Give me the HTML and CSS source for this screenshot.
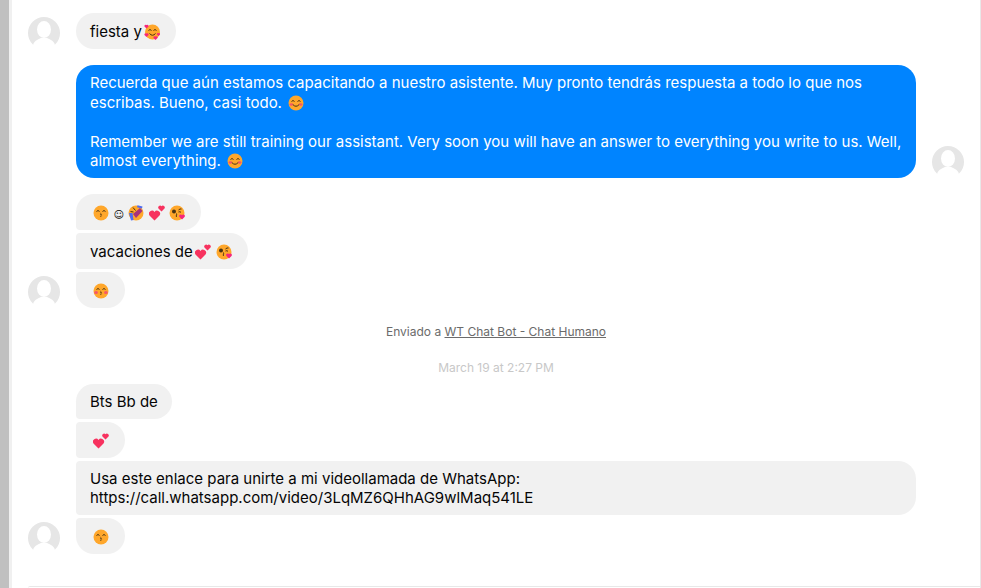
FILE: index.html
```html
<!DOCTYPE html>
<html lang="en">
<head>
    <meta charset="UTF-8">
    <meta name="viewport" content="width=device-width, initial-scale=1.0">
    <title>Chat</title>
    <link rel="stylesheet" href="styles.css">
</head>
<body>
    <svg class="defs" width="0" height="0">
        <defs>
            <symbol id="avatar" viewBox="0 0 32 32">
                <circle cx="16" cy="16" r="16" fill="#e6e6e6"/>
                <ellipse cx="16" cy="12.500" rx="7" ry="8.500" fill="#fff"/>
                <path d="M5 28.500c.5-4 3.500-5.500 8-7.500h6c4.500 2 7.500 3.500 8 7.500a16 16 0 0 1-22 0z" fill="#fff"/>
            </symbol>
            <symbol id="smile" viewBox="0 0 16 16">
                <circle cx="8" cy="8" r="7.500" fill="#ffa72b"/>
                <ellipse cx="3.300" cy="9.500" rx="1.800" ry="1.200" fill="#f5566a"/>
                <ellipse cx="12.700" cy="9.500" rx="1.800" ry="1.200" fill="#f5566a"/>
                <path d="M3.500 6.500q1.500-2 3 0M9.500 6.500q1.500-2 3 0M4.800 9.500q3.200 3.500 6.400 0" fill="none" stroke="#4a3312" stroke-width="1"/>
            </symbol>
            <symbol id="kiss" viewBox="0 0 16 16">
                <circle cx="8" cy="8" r="7.500" fill="#ffa72b"/>
                <path d="M3.500 6.500q1.500-2 3 0M9.500 6.500q1.500-2 3 0M7.500 8.300q1.800.7 0 1.700q1.800.7 0 1.700" fill="none" stroke="#4a3312" stroke-width="1"/>
            </symbol>
            <symbol id="kissblush" viewBox="0 0 16 16">
                <use href="#kiss"/>
                <ellipse cx="3.100" cy="9.500" rx="1.800" ry="1.500" fill="#f5566a"/>
                <ellipse cx="12.900" cy="9.500" rx="1.800" ry="1.500" fill="#f5566a"/>
            </symbol>
            <symbol id="hugs" viewBox="0 0 16 16">
                <circle cx="8.500" cy="8" r="7.500" fill="#ffa72b"/>
                <path d="M4.500 6.500q1.500-2 3 0M9.500 6.500q1.500-2 3 0M5.500 9.500q3 3.500 6 0" fill="none" stroke="#4a3312" stroke-width="1"/>
                <path d="M2.500 4.500l-2-2a1.300 1.300 0 0 1 2-1.500a1.300 1.300 0 0 1 2 1.500zM2.500 13l-2-2a1.300 1.300 0 0 1 2-1.500a1.300 1.300 0 0 1 2 1.500zM11.500 16l-2-2a1.300 1.300 0 0 1 2-1.500a1.300 1.300 0 0 1 2 1.500zM14.500 12l-1.500-1.500a1 1 0 0 1 1.500-1.200a1 1 0 0 1 1.500 1.200z" fill="#f5267c"/>
            </symbol>
            <symbol id="rofl" viewBox="0 0 16 16">
                <circle cx="8" cy="8" r="7.500" fill="#ffa72b"/>
                <path d="M5 9l7-6 2.500 3-6.500 7z" fill="#a8327a"/>
                <path d="M5 2.500l2.500 3M2.500 6.500l3 .5" fill="none" stroke="#4a3312" stroke-width="1"/>
                <path d="M1 8l2 7.500 2.500-.5-1-7zM9.500.2l5 1.300-.5 2-5-1.300z" fill="#4f6cf0"/>
            </symbol>
            <symbol id="hearts" viewBox="0 0 16 16">
                <path d="M5.500 15.500l-5-5a3 3 0 0 1 5-3.500a3 3 0 0 1 5 3.500z" fill="#f7325f"/>
                <path d="M12.500 6.500l-3-3a1.900 1.900 0 0 1 3-2.300a1.900 1.900 0 0 1 3 2.300z" fill="#f7325f"/>
            </symbol>
            <symbol id="blow" viewBox="0 0 16 16">
                <circle cx="8" cy="8" r="7.500" fill="#ffa72b"/>
                <circle cx="5" cy="6.500" r="2" fill="#4a3312"/>
                <path d="M9.500 5q1.500-1.500 3-1M9.500 7q1.500-.7 2.500.3M7 8.500q1.800.7 0 1.700q1.800.7 0 1.700" fill="none" stroke="#4a3312" stroke-width="1"/>
                <path d="M13 14.500l-2.500-2.500a1.500 1.500 0 0 1 2.500-1.900a1.500 1.500 0 0 1 2.500 1.900z" fill="#f5267c"/>
            </symbol>
        </defs>
    </svg>

    <div class="strip"></div>
    <main class="panel">
        <div class="thread">
            <div class="row">
                <svg class="avatar"><use href="#avatar"/></svg>
                <div class="stack">
                    <div class="bubble">fiesta y<svg class="emoji"><use href="#hugs"/></svg></div>
                </div>
            </div>

            <div class="row mine">
                <div class="stack">
                    <div class="bubble blue">Recuerda que aún estamos capacitando a nuestro asistente. Muy pronto tendrás respuesta a todo lo que nos escribas. Bueno, casi todo. <svg class="emoji"><use href="#smile"/></svg><br><br>Remember we are still training our assistant. Very soon you will have an answer to everything you write to us. Well, almost everything. <svg class="emoji"><use href="#smile"/></svg></div>
                </div>
                <svg class="avatar"><use href="#avatar"/></svg>
            </div>

            <div class="row">
                <svg class="avatar"><use href="#avatar"/></svg>
                <div class="stack">
                    <div class="bubble first"><svg class="emoji"><use href="#kiss"/></svg><span class="plain">☺</span><svg class="emoji"><use href="#rofl"/></svg><svg class="emoji"><use href="#hearts"/></svg><svg class="emoji"><use href="#blow"/></svg></div>
                    <div class="bubble middle">vacaciones de<svg class="emoji"><use href="#hearts"/></svg><svg class="emoji"><use href="#blow"/></svg></div>
                    <div class="bubble last"><svg class="emoji"><use href="#kissblush"/></svg></div>
                </div>
            </div>

            <p class="sent">Enviado a <a href="#">WT Chat Bot - Chat Humano</a></p>
            <p class="date">March 19 at 2:27 PM</p>

            <div class="row">
                <svg class="avatar"><use href="#avatar"/></svg>
                <div class="stack">
                    <div class="bubble first text-only">Bts Bb de</div>
                    <div class="bubble middle"><svg class="emoji"><use href="#hearts"/></svg></div>
                    <div class="bubble middle wide">Usa este enlace para unirte a mi videollamada de WhatsApp:<br>https://call.whatsapp.com/video/3LqMZ6QHhAG9wlMaq541LE</div>
                    <div class="bubble last"><svg class="emoji"><use href="#kiss"/></svg></div>
                </div>
            </div>
        </div>
        <div class="composer"></div>
    </main>
</body>
</html>
```

FILE: styles.css
```css
html, body {
    height: 100%;
}
body {
    margin: 0;
    display: flex;
    overflow: hidden;
    background-color: #fff;
    font-family: Inter, "Liberation Sans", sans-serif;
    font-size: 15px;
    color: #050505;
}
.defs {
    position: absolute;
}
.strip {
    width: 9px;
    flex: none;
    background-color: #c0c0c0;
}
.panel {
    flex: 1;
    display: flex;
    flex-direction: column;
    border-left: 3px solid #f0f0f0;
    border-right: 1px solid #e8e8e8;
}
.thread {
    flex: 1;
    display: flex;
    flex-direction: column;
    padding: 13px 16px 0;
}
.row {
    display: flex;
    align-items: flex-end;
    gap: 16px;
    margin-bottom: 16px;
}
.stack {
    width: 840px;
    display: flex;
    flex-direction: column;
    align-items: flex-start;
    gap: 3px;
}
.avatar {
    width: 32px;
    height: 32px;
    flex: none;
}
.mine .stack {
    margin-left: 48px;
}
.bubble {
    box-sizing: border-box;
    min-height: 36px;
    padding: 8px 14px 7px;
    border-radius: 18px;
    background-color: #f1f1f1;
    line-height: 19.5px;
}
.bubble.text-only {
    min-height: 35px;
}
.bubble.first {
    border-bottom-left-radius: 4px;
}
.bubble.middle {
    border-top-left-radius: 4px;
    border-bottom-left-radius: 4px;
}
.bubble.last {
    border-top-left-radius: 4px;
}
.bubble.wide {
    width: 100%;
}
.blue {
    width: 100%;
    padding-top: 7.5px;
    background-color: #0084ff;
    color: #fff;
}
.emoji {
    width: 16px;
    height: 16px;
    vertical-align: -3px;
    margin: 3px 2px 0 2.5px;
}
.blue .emoji {
    margin: 2.5px 1px 0 1.5px;
}
.blue .emoji:last-child {
    margin-top: 1.5px;
}
.plain {
    padding: 0 2px 0 3px;
    font-family: "DejaVu Sans", sans-serif;
    font-size: 10px;
    line-height: 1;
}
.sent, .date {
    margin: 0;
    text-align: center;
    font-size: 12px;
    line-height: 16px;
}
.sent {
    color: #6b6b6b;
}
.sent a {
    color: #6b6b6b;
}
.date {
    margin-top: 20px;
    margin-bottom: 8px;
    color: #c8c8c8;
}
.composer {
    height: 1px;
    margin-left: 16px;
    border-top: 1px solid #e8e8e8;
    border-top-left-radius: 4px;
}
```
